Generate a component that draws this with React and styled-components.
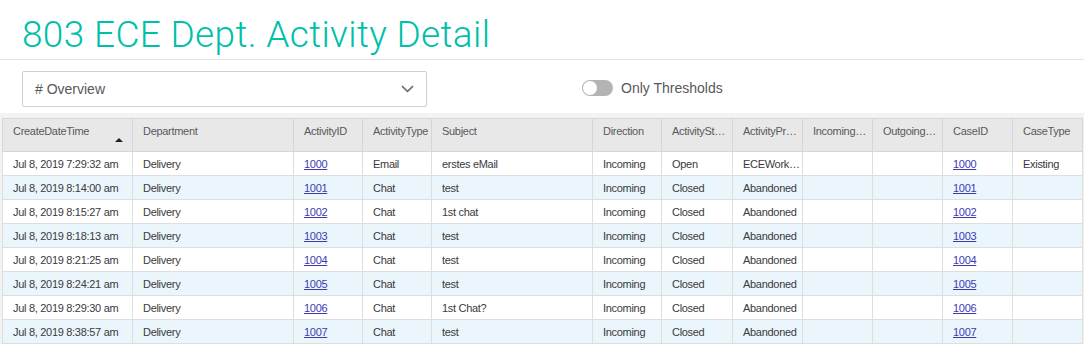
import styled, { createGlobalStyle } from "styled-components";
import { useState } from "react";

const GlobalStyle = createGlobalStyle`
  html, body {
    margin: 0;
    padding: 0;
    background: #fff;
    overflow: hidden;
    font-family: "Liberation Sans", Arial, sans-serif;
  }
`;

const columns = [
  { key: "created", label: "CreateDateTime", width: 130, sorted: true },
  { key: "dept", label: "Department", width: 161 },
  { key: "activityId", label: "ActivityID", width: 69, link: true },
  { key: "type", label: "ActivityType", width: 69 },
  { key: "subject", label: "Subject", width: 161 },
  { key: "direction", label: "Direction", width: 69 },
  { key: "status", label: "ActivityStatus", width: 71 },
  { key: "process", label: "ActivityProcess", width: 70 },
  { key: "incoming", label: "IncomingChannel", width: 70 },
  { key: "outgoing", label: "OutgoingType", width: 70 },
  { key: "caseId", label: "CaseID", width: 70, link: true },
  { key: "caseType", label: "CaseType", width: 70 },
];

const rows = [
  ["7:29:32", "1000", "Email", "erstes eMail", "Open", "ECEWorkflow", "Existing"],
  ["8:14:00", "1001", "Chat", "test", "Closed", "Abandoned", ""],
  ["8:15:27", "1002", "Chat", "1st chat", "Closed", "Abandoned", ""],
  ["8:18:13", "1003", "Chat", "test", "Closed", "Abandoned", ""],
  ["8:21:25", "1004", "Chat", "test", "Closed", "Abandoned", ""],
  ["8:24:21", "1005", "Chat", "test", "Closed", "Abandoned", ""],
  ["8:29:30", "1006", "Chat", "1st Chat?", "Closed", "Abandoned", ""],
  ["8:38:57", "1007", "Chat", "test", "Closed", "Abandoned", ""],
].map(([time, id, type, subject, status, process, caseType]) => ({
  created: `Jul 8, 2019 ${time} am`,
  dept: "Delivery",
  activityId: id,
  type,
  subject,
  direction: "Incoming",
  status,
  process,
  incoming: "",
  outgoing: "",
  caseId: id,
  caseType,
}));

export default function App() {
  const [thresholds, setThresholds] = useState(false);
  return (
    <Page>
      <GlobalStyle />
      <Header>
        <Title>803 ECE Dept. Activity Detail</Title>
      </Header>
      <Toolbar>
        <Select>
          <SelectText># Overview</SelectText>
          <svg width="13" height="8" viewBox="0 0 13 8">
            <path d="M1 1.2 L6.5 6.4 L12 1.2" fill="none" stroke="#6e6e70" strokeWidth="1.6" />
          </svg>
        </Select>
        <ToggleLabel onClick={() => setThresholds(!thresholds)}>
          <Switch $on={thresholds}>
            <Knob $on={thresholds} />
          </Switch>
          Only Thresholds
        </ToggleLabel>
      </Toolbar>
      <Band>
        <Table>
          <colgroup>
            {columns.map((c) => (
              <col key={c.key} style={{ width: c.width }} />
            ))}
          </colgroup>
          <thead>
            <tr>
              {columns.map((c) => (
                <Th key={c.key}>
                  {c.label}
                  {c.sorted && <SortArrow />}
                </Th>
              ))}
            </tr>
          </thead>
          <tbody>
            {rows.map((r, i) => (
              <Tr key={i} $alt={i % 2 === 1}>
                {columns.map((c) => (
                  <Td key={c.key}>
                    {c.link ? <CellLink href="#">{r[c.key]}</CellLink> : r[c.key]}
                  </Td>
                ))}
              </Tr>
            ))}
          </tbody>
        </Table>
      </Band>
    </Page>
  );
}

const Page = styled.div`
  width: 1084px;
  height: 345px;
  overflow: hidden;
`;

const Header = styled.div`
  padding: 14px 22px 3px;
  border-bottom: 1px solid #e2e2e2;
`;

const Title = styled.h1`
  margin: 0;
  font-family: Roboto, "Liberation Sans", sans-serif;
  font-weight: 300;
  font-size: 37px;
  letter-spacing: 0.35px;
  line-height: 42px;
  color: #00bfa9;
`;

const Toolbar = styled.div`
  display: flex;
  align-items: center;
  gap: 155px;
  padding: 11px 22px 6px;
`;

const Select = styled.div`
  box-sizing: border-box;
  width: 405px;
  height: 36px;
  border: 1px solid #cfcfcf;
  border-radius: 2px;
  display: flex;
  align-items: center;
  justify-content: space-between;
  padding: 0 12px 0 12px;
`;

const SelectText = styled.span`
  font-size: 14px;
  color: #58585b;
`;

const ToggleLabel = styled.div`
  display: flex;
  align-items: center;
  gap: 8px;
  font-size: 14px;
  color: #58585b;
  cursor: pointer;
  margin-top: -2px;
`;

const Switch = styled.div`
  width: 31px;
  height: 16px;
  border-radius: 8px;
  background: ${(p) => (p.$on ? "#00bfa9" : "#b4b4b4")};
  display: flex;
  align-items: center;
  padding: 0 1px;
  box-sizing: border-box;
  justify-content: ${(p) => (p.$on ? "flex-end" : "flex-start")};
`;

const Knob = styled.div`
  width: 14px;
  height: 14px;
  border-radius: 50%;
  background: #fff;
`;

const Band = styled.div`
  background: #f2f2f2;
  padding: 5px 0 0 2px;
`;

const Table = styled.table`
  table-layout: fixed;
  width: 1081px;
  border-collapse: collapse;
  font-size: 11px;
  letter-spacing: -0.3px;
  color: #3a3a3c;
`;

const Th = styled.th`
  position: relative;
  height: 33px;
  box-sizing: border-box;
  padding: 5px 1px 0 10px;
  vertical-align: top;
  text-align: left;
  font-weight: normal;
  line-height: 14px;
  color: #58595b;
  background: #e8e8e8;
  border: 1px solid #d6d6d6;
  white-space: nowrap;
  overflow: hidden;
  text-overflow: ellipsis;
`;

const SortArrow = styled.span`
  position: absolute;
  right: 9px;
  top: 19px;
  width: 0;
  height: 0;
  border-left: 4px solid transparent;
  border-right: 4px solid transparent;
  border-bottom: 4px solid #222;
`;

const Tr = styled.tr`
  background: ${(p) => (p.$alt ? "#eaf6fb" : "#fff")};
`;

const Td = styled.td`
  height: 24px;
  box-sizing: border-box;
  padding: 0 1px 0 10px;
  line-height: 14px;
  border: 1px solid #dedede;
  white-space: nowrap;
  overflow: hidden;
  text-overflow: ellipsis;
`;

const CellLink = styled.a`
  color: #3b3bb5;
  text-decoration: underline;
`;
